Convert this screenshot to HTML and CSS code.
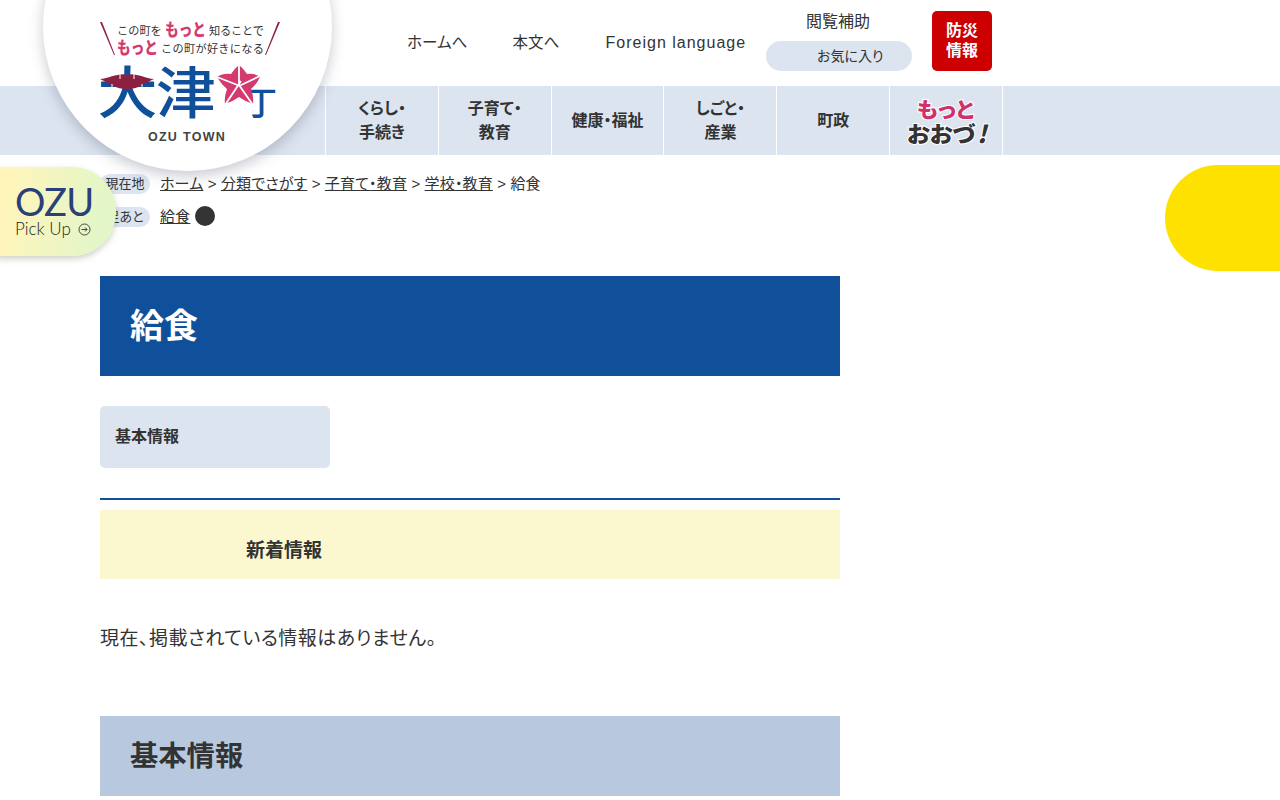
FILE: index.html
```html
<!DOCTYPE html>
<html lang="ja">
<head>
<meta charset="utf-8">
<title>給食</title>
<link rel="stylesheet" href="styles.css">
</head>
<body>
<header class="header">
  <div class="top">
    <nav class="top-links">
      <a class="top-link">ホームへ</a>
      <a class="top-link">本文へ</a>
      <a class="top-link latin">Foreign language</a>
    </nav>
    <div class="assist">
      <div class="assist-title">閲覧補助</div>
      <div class="fav">お気に入り</div>
    </div>
    <div class="bousai">防災<br>情報</div>
  </div>
  <nav class="gnav">
    <a class="gitem">くらし・<br>手続き</a>
    <a class="gitem">子育て・<br>教育</a>
    <a class="gitem">健康・福祉</a>
    <a class="gitem">しごと・<br>産業</a>
    <a class="gitem">町政</a>
    <a class="gitem motto">
      <svg class="motto-svg" width="112" height="68" viewBox="0 0 112 68">
        <text class="motto-pink" x="27" y="30" textLength="57" lengthAdjust="spacingAndGlyphs">もっと</text>
        <text class="motto-dark" x="17" y="55" textLength="68" lengthAdjust="spacingAndGlyphs">おおづ</text>
        <text class="motto-bang" x="87" y="56">!</text>
      </svg>
    </a>
  </nav>
  <div class="logo">
    <svg class="logo-svg" width="190" height="130" viewBox="0 0 190 130">
      <path class="slash" d="M0 0 L2 0 L15 33 L14 33 Z"/>
      <path class="slash" d="M180 0 L178 0 L165 33 L166 33 Z"/>
      <text class="tag" x="17" y="13">この町を</text>
      <text class="tag-pink" x="65" y="14" textLength="41" lengthAdjust="spacingAndGlyphs">もっと</text>
      <text class="tag" x="109" y="13" textLength="55" lengthAdjust="spacing">知ることで</text>
      <text class="tag-pink" x="17" y="32" textLength="41" lengthAdjust="spacingAndGlyphs">もっと</text>
      <text class="tag" x="61" y="31" textLength="103" lengthAdjust="spacing">この町が好きになる</text>
      <text class="logo-kanji" x="-2.5" y="91" textLength="60" lengthAdjust="spacingAndGlyphs">大</text>
      <text class="logo-kanji" x="56" y="91" textLength="60" lengthAdjust="spacingAndGlyphs">津</text>
      <text class="logo-cho" x="144" y="93">丁</text>
      <path class="lips" d="M0 57 C10 56 20 50 27 53 C34 50 44 56 54 57 C44 62 38 67 27 67 C16 67 10 62 0 57 Z"/>
      <path class="tick" d="M20 50V57M34 50V57M12 62V67M42 62V67"/>
      <path class="star" d="M139 43 Q144 47 147 52 Q155 51 160 55 Q157 62 151 67 Q154 75 153 82 Q146 80 139 75 Q132 80 125 82 Q124 75 127 67 Q121 62 117 55 Q123 51 131 52 Q134 47 139 43 Z"/>
      <path class="star-cut" d="M139 43V63M160 54L139 64M153 83L139 63M125 83L141 59M117 55L140 64"/>
      <text class="town" x="87" y="119" text-anchor="middle">OZU TOWN</text>
    </svg>
  </div>
</header>

<a class="pickup">
  <span class="pickup-ozu">OZU</span>
  <span class="pickup-sub">Pick Up
    <svg class="pickup-icon" width="13" height="13" viewBox="0 0 13 13"><circle cx="6.5" cy="6.5" r="5.5"/><path d="M3.5 6.5H9M7 4.5l2 2-2 2"/></svg>
  </span>
</a>
<div class="yellow-tab"></div>

<div class="crumbs">
  <div class="crumb-row">
    <span class="crumb-label">現在地</span>
    <span class="crumb-text"><a>ホーム</a> &gt; <a>分類でさがす</a> &gt; <a>子育て・教育</a> &gt; <a>学校・教育</a> &gt; 給食</span>
  </div>
  <div class="crumb-row">
    <span class="crumb-label">足あと</span>
    <span class="crumb-text"><a>給食</a></span>
    <span class="crumb-dot"></span>
  </div>
</div>

<main class="main">
  <h1 class="title">給食</h1>
  <div class="info-tab">基本情報</div>
  <div class="news">
    <h2 class="news-head">新着情報</h2>
  </div>
  <p class="empty">現在、掲載されている情報はありません。</p>
  <h2 class="sub-head">基本情報</h2>
</main>
</body>
</html>
```
FILE: styles.css
```css
* { box-sizing: border-box; }
html, body { margin: 0; height: 800px; overflow: hidden; background: #fff; }
body {
  position: relative;
  font-family: "Liberation Sans", "Noto Sans CJK JP", sans-serif;
  font-feature-settings: "palt";
  color: #333;
  font-size: 16px;
}
.header { position: relative; }
.top {
  height: 86px;
  display: flex;
  align-items: flex-start;
  padding-left: 407px;
}
.top-links {
  display: flex;
  gap: 45px;
  padding-top: 34px;
  width: 359px;
}
.top-link { font-size: 15.5px; line-height: 18px; letter-spacing: 0.1px; }
.latin { font-size: 16px; letter-spacing: 1px; margin-left: 1px; }
.assist { width: 146px; display: flex; flex-direction: column; align-items: center; }
.assist-title { font-size: 16px; line-height: 20px; margin: 12px 2px 0 0; }
.fav {
  width: 146px; height: 30px; margin-top: 9px;
  border-radius: 15px;
  background: #dce4ef;
  font-size: 14px;
  line-height: 30px;
  padding-left: 51px;
}
.bousai {
  width: 60px; height: 60px;
  margin: 11px 0 0 20px;
  border-radius: 5px;
  background: #cc0000;
  color: #fff;
  font-weight: 700;
  font-size: 16px;
  line-height: 20px;
  text-align: center;
  padding-top: 10px;
}
.gnav {
  height: 69px;
  background: #dce4ef;
  display: flex;
  padding-left: 325px;
}
.gitem {
  width: 112.83px;
  border-left: 1px solid #fff;
  display: flex;
  align-items: center;
  justify-content: center;
  text-align: center;
  font-weight: 700;
  font-size: 16px;
  line-height: 24px;
}
.motto { border-right: 1px solid #fff; padding: 0; width: 114px; }
.motto-svg { display: block; }
.motto-pink, .motto-dark, .motto-bang {
  font-family: "Noto Sans CJK JP", sans-serif;
  font-weight: 900;
  paint-order: stroke;
  stroke: #fff;
  stroke-width: 2px;
}
.motto-pink { fill: #d0316c; font-size: 21px; }
.motto-dark { fill: #333; font-size: 22px; }
.motto-bang { fill: #333; font-size: 24px; font-style: italic; }
.logo {
  position: absolute;
  left: 43px; top: -118px;
  width: 289px; height: 289px;
  border-radius: 50%;
  background: #fff;
  box-shadow: 0 5px 14px rgba(60, 70, 90, 0.28);
}
.logo-svg { position: absolute; left: 57px; top: 140px; overflow: visible; }
.slash { fill: #8e2042; }
.tag { font-size: 11.2px; fill: #333; font-family: "Noto Sans CJK JP", sans-serif; font-feature-settings: normal; }
.tag-pink { font-size: 16.5px; font-weight: 900; fill: #d33a70; font-family: "Noto Sans CJK JP", sans-serif; font-feature-settings: normal; }
.logo-kanji { font-size: 56px; font-weight: 500; fill: #10509a; font-family: "Noto Sans CJK JP", sans-serif; font-feature-settings: normal; }
.logo-cho { font-size: 33px; font-weight: 500; fill: #10509a; font-family: "Noto Sans CJK JP", sans-serif; font-feature-settings: normal; }
.lips { fill: #8c2040; }
.tick { fill: none; stroke: #fff; stroke-width: 1; }
.star { fill: #d33a70; }
.star-cut { fill: none; stroke: #fff; stroke-width: 1.8; }
.town { font-size: 12.5px; font-weight: 700; fill: #444; letter-spacing: 1.3px; }
.pickup {
  position: absolute;
  left: -40px; top: 167px;
  width: 156px; height: 89px;
  border-radius: 44px;
  background: linear-gradient(100deg, #fff5bb 30%, #e2f6c8 90%);
  box-shadow: 0 3px 6px rgba(90, 110, 70, 0.3);
  padding-left: 55px;
  display: flex;
  flex-direction: column;
}
.pickup-ozu { font-size: 38px; line-height: 34px; margin-top: 17px; color: #2b3f78; font-family: "Lato", sans-serif; font-weight: 400; letter-spacing: -0.7px; }
.pickup-sub { font-size: 17px; line-height: 20px; color: #222; margin-top: 1px; font-family: "Lato", sans-serif; font-weight: 300; display: flex; align-items: center; gap: 7px; }
.pickup-icon { fill: none; stroke: #444; stroke-width: 1; }
.yellow-tab {
  position: absolute;
  left: 1165px; top: 165px;
  width: 170px; height: 106px;
  border-radius: 53px;
  background: #ffe100;
}
.crumbs { padding: 19px 0 0 100px; height: 121px; }
.crumb-row { display: flex; align-items: center; height: 20px; margin-bottom: 13px; }
.crumb-label {
  width: 50px; height: 20px;
  border-radius: 10px;
  background: #dce4ef;
  font-size: 13px;
  line-height: 20px;
  text-align: center;
  margin-right: 10px;
}
.crumb-text { font-size: 15px; line-height: 18px; margin-top: -1px; letter-spacing: 0.15px; }
.crumb-text a { text-decoration: underline; }
.crumb-dot { width: 20px; height: 20px; border-radius: 50%; background: #333; margin-left: 5px; margin-top: -2px; }
.main { width: 740px; margin-left: 100px; }
.title {
  margin: 0;
  height: 100px;
  background: #10509a;
  color: #fff;
  font-size: 34px;
  line-height: 100px;
  padding-left: 30px;
}
.info-tab {
  width: 230px; height: 62px;
  margin-top: 30px;
  background: #dce4ef;
  border-radius: 5px;
  font-size: 16px;
  font-weight: 700;
  line-height: 62px;
  padding-left: 15px;
}
.news { margin-top: 30px; border-top: 2px solid #10509a; padding-top: 10px; }
.news-head {
  margin: 0;
  height: 69px;
  background: #fbf7cf;
  font-size: 19px;
  line-height: 82px;
  padding-left: 146px;
}
.empty { margin: 48px 0 0; font-size: 19px; line-height: 24px; letter-spacing: 0.5px; }
.sub-head {
  margin: 65px 0 0;
  height: 80px;
  background: #b8c9df;
  font-size: 28.3px;
  line-height: 80px;
  padding-left: 30px;
}
```
